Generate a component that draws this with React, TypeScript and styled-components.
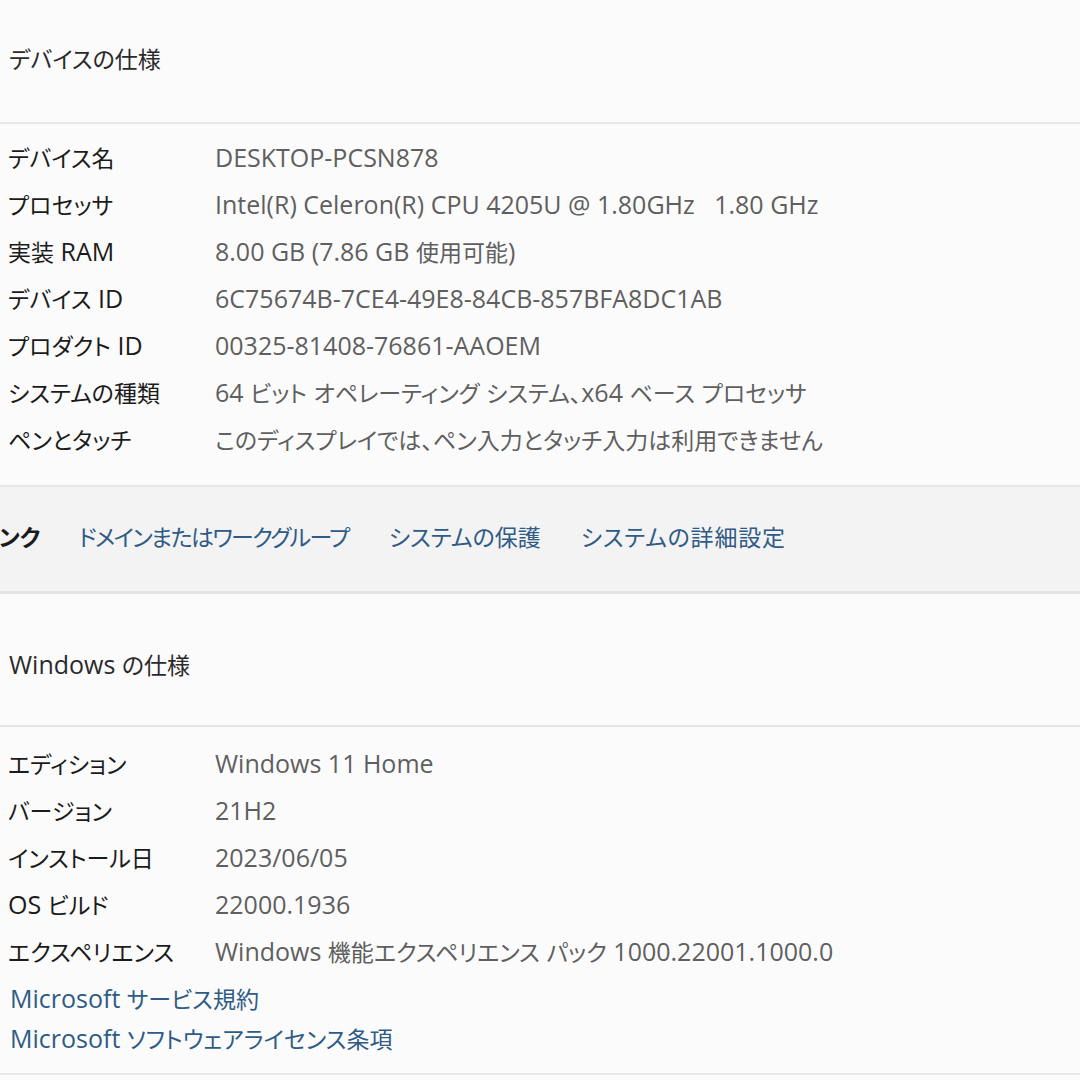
import React from 'react';
import styled, { createGlobalStyle } from 'styled-components';

const GlobalStyle = createGlobalStyle`
  html, body {
    margin: 0;
    padding: 0;
    background: #fbfbfb;
    overflow: hidden;
  }
  body {
    font-family: "Open Sans", "Noto Sans CJK JP", sans-serif;
    font-feature-settings: "palt";
  }
`;

const Page = styled.div`
  width: 1080px;
  height: 1080px;
  overflow: hidden;
  background: #fbfbfb;
  color: #1c1c1c;
  font-size: 25px;
`;

// Japanese runs sit a little smaller than the Latin text, like Yu Gothic UI next to Segoe UI
const Cjk = styled.span`
  font-size: 23px;
`;

const SectionHeader = styled.div<{ $height: number; $padTop?: number; $padBottom?: number }>`
  height: ${p => p.$height}px;
  display: flex;
  align-items: center;
  padding: ${p => p.$padTop ?? 0}px 0 ${p => p.$padBottom ?? 0}px 9px;
  border-bottom: 2px solid #e7e7e7;
  color: #2a2a2a;
  box-sizing: border-box;
  white-space: nowrap;
`;

const HeaderText = styled.span`
  white-space: pre;
`;

const SpecList = styled.div<{ $padTop: number; $padBottom: number }>`
  padding: ${p => p.$padTop}px 0 ${p => p.$padBottom}px 0;
`;

const SpecRow = styled.div`
  display: grid;
  grid-template-columns: 207px 1fr;
  height: 47px;
  align-items: center;
  padding-left: 8px;
  white-space: nowrap;
`;

const Label = styled.span`
  color: #1b1b1b;
`;

const Value = styled.span`
  color: #5f5f5f;
`;

const LinkBar = styled.div`
  height: 98px;
  padding-bottom: 6px;
  display: flex;
  align-items: center;
  gap: 40px;
  background: #f3f3f3;
  border-top: 2px solid #e6e6e6;
  border-bottom: 3px solid #e4e4e4;
  white-space: nowrap;
`;

const BarTitle = styled.span`
  color: #1b1b1b;
  font-weight: 600;
  font-size: 23px;
  margin-left: -67px;
  margin-right: -2px;
`;

const Link = styled.a<{ $tracking?: number }>`
  color: #2f5b86;
  text-decoration: none;
  cursor: pointer;
  letter-spacing: ${p => p.$tracking ?? 0}px;
`;

const BarLink = styled(Link)`
  font-size: 23px;
`;

const FootLinks = styled.div`
  display: flex;
  flex-direction: column;
  padding: 4px 0 15px 10px;
  border-bottom: 2px solid #e8e8e8;
`;

const FootLink = styled(Link)`
  height: 40px;
  line-height: 40px;
  white-space: nowrap;
`;

const CJK_RUN = /([\u3000-\u30ff\u3400-\u9fff\uff00-\uffef]+)/;

function Mixed({ text }: { text: string }) {
  return (
    <>
      {text.split(CJK_RUN).map((part, i) =>
        i % 2 === 1 ? <Cjk key={i}>{part}</Cjk> : part
      )}
    </>
  );
}

const deviceSpecs: [string, string][] = [
  ['デバイス名', 'DESKTOP-PCSN878'],
  ['プロセッサ', 'Intel(R) Celeron(R) CPU 4205U @ 1.80GHz\u00a0\u00a0\u00a01.80 GHz'],
  ['実装 RAM', '8.00 GB (7.86 GB 使用可能)'],
  ['デバイス ID', '6C75674B-7CE4-49E8-84CB-857BFA8DC1AB'],
  ['プロダクト ID', '00325-81408-76861-AAOEM'],
  ['システムの種類', '64 ビット オペレーティング システム、x64 ベース プロセッサ'],
  ['ペンとタッチ', 'このディスプレイでは、ペン入力とタッチ入力は利用できません']
];

const windowsSpecs: [string, string][] = [
  ['エディション', 'Windows 11 Home'],
  ['バージョン', '21H2'],
  ['インストール日', '2023/06/05'],
  ['OS ビルド', '22000.1936'],
  ['エクスペリエンス', 'Windows 機能エクスペリエンス パック 1000.22001.1000.0']
];

function SpecRows({ items }: { items: [string, string][] }) {
  return (
    <>
      {items.map(([k, v]) => (
        <SpecRow key={k}>
          <Label>
            <Mixed text={k} />
          </Label>
          <Value>
            <Mixed text={v} />
          </Value>
        </SpecRow>
      ))}
    </>
  );
}

export default function App() {
  return (
    <Page>
      <GlobalStyle />
      <SectionHeader $height={124} $padBottom={6}>
        <HeaderText>
          <Mixed text="デバイスの仕様" />
        </HeaderText>
      </SectionHeader>
      <SpecList $padTop={9} $padBottom={23}>
        <SpecRows items={deviceSpecs} />
      </SpecList>
      <LinkBar>
        <BarTitle>関連リンク</BarTitle>
        <BarLink $tracking={-1.6}>ドメインまたはワークグループ</BarLink>
        <BarLink>システムの保護</BarLink>
        <BarLink $tracking={0.8}>システムの詳細設定</BarLink>
      </LinkBar>
      <SectionHeader $height={133} $padTop={8}>
        <HeaderText>
          <Mixed text="Windows の仕様" />
        </HeaderText>
      </SectionHeader>
      <SpecList $padTop={12} $padBottom={0}>
        <SpecRows items={windowsSpecs} />
      </SpecList>
      <FootLinks>
        <FootLink>
          <Mixed text="Microsoft サービス規約" />
        </FootLink>
        <FootLink>
          <Mixed text="Microsoft ソフトウェアライセンス条項" />
        </FootLink>
      </FootLinks>
    </Page>
  );
}
